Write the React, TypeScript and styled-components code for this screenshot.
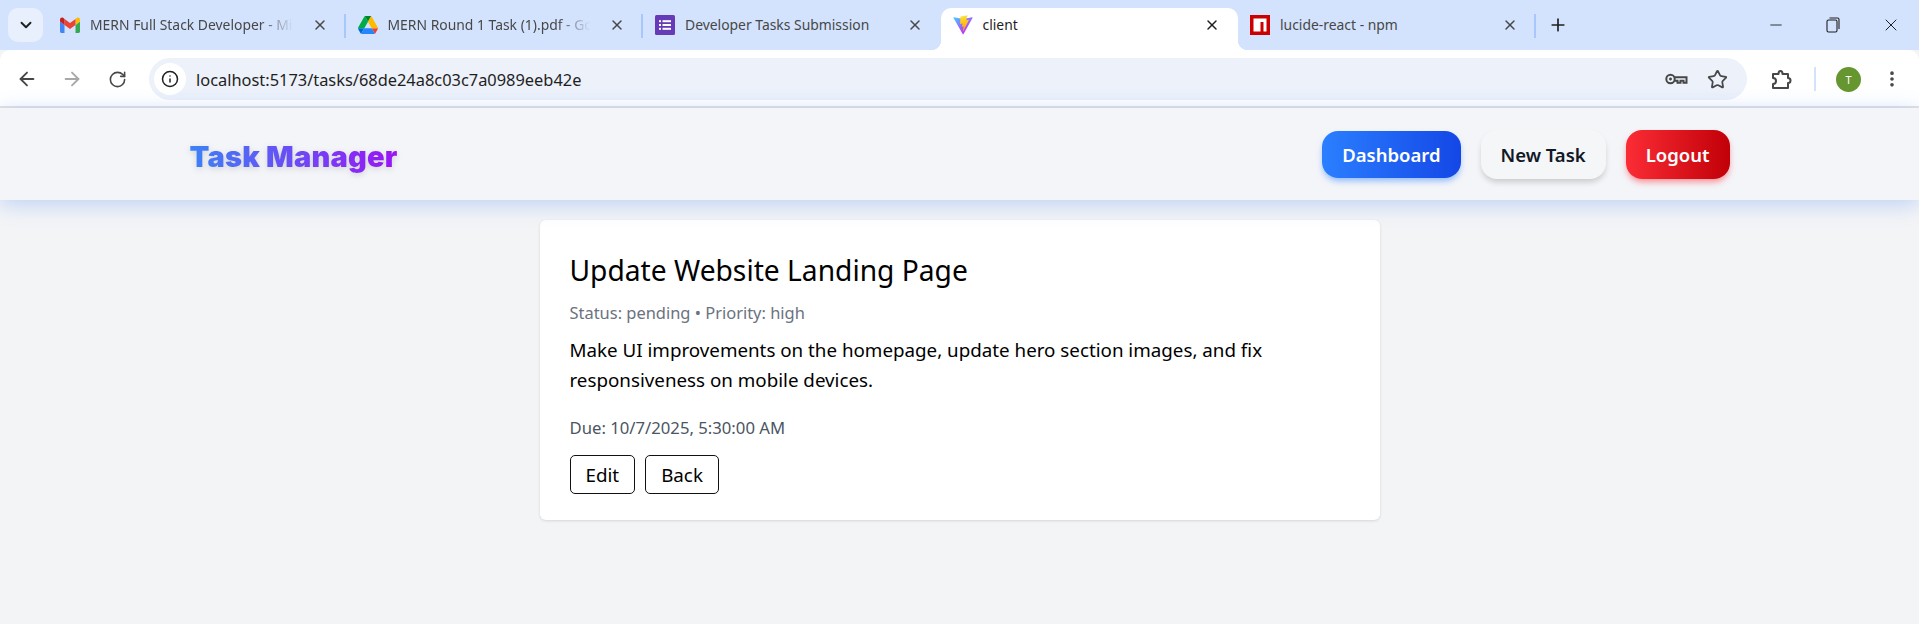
import React from 'react'
import styled, { createGlobalStyle } from 'styled-components'
import { ArrowLeft, ArrowRight, ChevronDown, EllipsisVertical, Info, Minus, Plus, RotateCw, Star, X } from 'lucide-react'

const GlobalStyle = createGlobalStyle`
  html, body {
    margin: 0;
    padding: 0;
    background: #f3f4f6;
  }
  * {
    box-sizing: border-box;
  }
`

const Page = styled.div`
  width: 1919px;
  height: 624px;
  overflow: hidden;
  display: flex;
  flex-direction: column;
  background: #f3f4f6;
  font-family: 'Noto Sans', 'Open Sans', sans-serif;
`

const TabStrip = styled.div`
  height: 50px;
  flex: none;
  display: flex;
  align-items: flex-end;
  background: #d3e3fd;
  position: relative;
`

const TabMenu = styled.button`
  width: 35px;
  height: 34px;
  margin: 0 5px 8px 8px;
  flex: none;
  border: 0;
  padding: 0;
  border-radius: 10px;
  background: #e9f0fd;
  color: #1f1f1f;
  display: flex;
  align-items: center;
  justify-content: center;
`

const Tab = styled.div<{ $active?: boolean; $sep?: boolean }>`
  position: relative;
  width: 297.5px;
  height: 42px;
  flex: none;
  display: flex;
  align-items: center;
  padding: 0 18px 8px 12px;
  gap: 10px;
  border-radius: 10px 10px 0 0;
  background: ${({ $active }) => ($active ? '#ffffff' : 'transparent')};
  color: ${({ $active }) => ($active ? '#1f1f1f' : '#474747')};

  ${({ $active }) =>
    $active &&
    `
    &::before, &::after {
      content: '';
      position: absolute;
      bottom: 0;
      width: 10px;
      height: 10px;
    }
    &::before {
      left: -10px;
      background: radial-gradient(circle at 0 0, transparent 10px, #fff 10.5px);
    }
    &::after {
      right: -10px;
      background: radial-gradient(circle at 100% 0, transparent 10px, #fff 10.5px);
    }
  `}

  ${({ $sep }) =>
    $sep &&
    `
    &::after {
      content: '';
      position: absolute;
      right: 0;
      top: 6px;
      width: 2px;
      height: 24px;
      background: #a8c7fa;
    }
  `}
`

const Favicon = styled.span`
  width: 20px;
  height: 20px;
  flex: none;
  display: flex;
  align-items: center;
  justify-content: center;
`

const TabTitle = styled.span<{ $fade?: boolean }>`
  flex: 1;
  min-width: 0;
  font-size: 13.9px;
  line-height: 18px;
  white-space: nowrap;
  overflow: hidden;
  ${({ $fade }) =>
    $fade &&
    `
    -webkit-mask-image: linear-gradient(to right, #000 80%, transparent 96%);
    mask-image: linear-gradient(to right, #000 80%, transparent 96%);
  `}
`

const NewTab = styled.span`
  margin: 0 0 8px 12px;
  height: 34px;
  display: flex;
  align-items: center;
  color: #1f1f1f;
`

const WindowControls = styled.div`
  margin-left: auto;
  height: 50px;
  display: flex;
  align-items: center;
  padding: 0 18px 0 0;
  gap: 41px;
  color: #1f1f1f;
`

const Toolbar = styled.div`
  height: 58px;
  flex: none;
  display: flex;
  align-items: flex-start;
  background: #ffffff;
  border-radius: 10px 10px 0 0;
  border-bottom: 2px solid #e3e3e3;
  padding: 8px 0 0 15px;
  color: #474747;
`

const NavIcon = styled.span<{ $muted?: boolean }>`
  width: 24px;
  height: 42px;
  margin-right: 21px;
  flex: none;
  display: flex;
  align-items: center;
  justify-content: center;
  color: ${({ $muted }) => ($muted ? '#a8a8a8' : '#474747')};
`

const Omnibox = styled.div`
  width: 1598px;
  height: 42px;
  margin-left: -1px;
  flex: none;
  display: flex;
  align-items: center;
  background: #ecf1fa;
  border-radius: 21px;
  padding: 0 19px 0 5px;
  color: #1f1f1f;
`

const InfoBadge = styled.span`
  width: 32px;
  height: 32px;
  flex: none;
  border-radius: 50%;
  background: #ffffff;
  display: flex;
  align-items: center;
  justify-content: center;
  margin-right: 10px;
`

const Url = styled.span`
  flex: 1;
  font-size: 16.4px;
  color: #1f1f1f;
`

const OmniIcons = styled.div`
  display: flex;
  align-items: center;
  gap: 19px;
  color: #474747;
`

const ToolbarEnd = styled.div`
  flex: 1;
  height: 42px;
  display: flex;
  align-items: center;
  padding-left: 22px;
  color: #474747;
`

const ToolbarRule = styled.span`
  width: 2px;
  height: 24px;
  background: #d3e3fd;
  margin: 0 20px 0 21px;
`

const Avatar = styled.span`
  width: 25px;
  height: 25px;
  border-radius: 50%;
  background: #66962f;
  color: #ffffff;
  font-size: 11px;
  display: flex;
  align-items: center;
  justify-content: center;
  margin-right: 21px;
`

const NavBar = styled.nav`
  height: 92px;
  flex: none;
  background: #f4f5f8;
  box-shadow: 0 4px 20px rgba(59, 130, 246, 0.3);
  position: relative;
`

const NavInner = styled.div`
  width: 1540px;
  height: 100%;
  margin: 0 auto;
  display: flex;
  align-items: center;
  justify-content: space-between;
`

const Logo = styled.span`
  font-family: 'Inter', 'Noto Sans', sans-serif;
  font-size: 29px;
  font-weight: 900;
  letter-spacing: 0.2px;
  position: relative;
  top: 2px;
  background: linear-gradient(to right, #3b82f6, #9b14f5);
  -webkit-background-clip: text;
  background-clip: text;
  color: transparent;
  filter: drop-shadow(0 2px 3px rgba(0, 0, 0, 0.14));
`

const NavLinks = styled.div`
  display: flex;
  align-items: center;
  gap: 20px;
`

const NavButton = styled.a<{ $variant: 'primary' | 'plain' | 'danger' }>`
  height: ${({ $variant }) => ($variant === 'primary' ? '47px' : '49px')};
  padding: 0 20px;
  display: flex;
  align-items: center;
  border-radius: 16px;
  font-size: 18.5px;
  font-weight: 600;
  color: ${({ $variant }) => ($variant === 'plain' ? '#111827' : '#ffffff')};
  background: ${({ $variant }) =>
    $variant === 'primary'
      ? 'linear-gradient(to right, #2b7fff, #1447e6)'
      : $variant === 'danger'
        ? 'linear-gradient(to right, #fb2c36, #c10007)'
        : '#f5f6f8'};
  box-shadow: ${({ $variant }) =>
    $variant === 'primary'
      ? '0 4px 6px -1px rgba(43, 127, 255, 0.5)'
      : $variant === 'danger'
        ? '0 4px 6px -1px rgba(251, 44, 54, 0.5)'
        : '0 4px 6px -1px rgba(0, 0, 0, 0.18)'};
`

const Content = styled.main`
  flex: 1;
  display: flex;
  justify-content: center;
  padding-top: 20px;
`

const Card = styled.article`
  width: 840px;
  height: 300px;
  padding: 32px 30px 0;
  background: #ffffff;
  border-radius: 6px;
  box-shadow: 0 1px 3px rgba(0, 0, 0, 0.12);
`

const Title = styled.h1`
  margin: 0;
  font-size: 28.2px;
  line-height: 36px;
  font-weight: 400;
  color: #000000;
`

const Meta = styled.p`
  margin: 12px 0 0;
  font-size: 16.45px;
  line-height: 26px;
  color: #6b7280;
`

const Body = styled.p`
  margin: 9px 0 0;
  font-size: 18.77px;
  line-height: 30px;
  color: #000000;
`

const Due = styled.p`
  margin: 21px 0 0;
  font-size: 16.7px;
  line-height: 24px;
  color: #4b5563;
`

const Actions = styled.div`
  display: flex;
  gap: 10px;
  margin-top: 15px;
`

const OutlineButton = styled.button`
  height: 39px;
  padding: 0 15px;
  border: 1px solid #111111;
  border-radius: 5px;
  background: #ffffff;
  color: #000000;
  font-family: inherit;
  font-size: 18.8px;
`

const GmailIcon = () => (
  <svg width="20" height="16" viewBox="0 0 20 16">
    <path d="M1.4 16H4.5V8L0 4.6V14.6C0 15.4.6 16 1.4 16Z" fill="#4285f4" />
    <path d="M15.5 16h3.1c.8 0 1.4-.6 1.4-1.4V4.6L15.5 8Z" fill="#34a853" />
    <path d="M15.5 2V8L20 4.6V2.6C20 .8 18 -.2 16.6 .9Z" fill="#fbbc04" />
    <path d="M4.5 8V2L10 6.1 15.5 2V8L10 12.1Z" fill="#ea4335" />
    <path d="M0 2.6V4.6L4.5 8V2L3.4 .9C2 -.2 0 .8 0 2.6Z" fill="#c5221f" />
  </svg>
)

const DriveIcon = () => (
  <svg width="20" height="18" viewBox="0 0 87.3 78">
    <path d="M6.6 66.85l3.85 6.65c.8 1.4 1.95 2.5 3.3 3.3L27.5 53H0c0 1.55.4 3.1 1.2 4.5z" fill="#0066da" />
    <path d="M43.65 25L29.9 1.2c-1.35.8-2.5 1.9-3.3 3.3L1.2 48.5C.4 49.9 0 51.45 0 53h27.5z" fill="#00ac47" />
    <path d="M73.55 76.8c1.35-.8 2.5-1.9 3.3-3.3l1.6-2.75L86.1 57.5c.8-1.4 1.2-2.95 1.2-4.5H59.8l5.85 11.5z" fill="#ea4335" />
    <path d="M43.65 25L57.4 1.2C56.05.4 54.5 0 52.9 0H34.4c-1.6 0-3.15.45-4.5 1.2z" fill="#00832d" />
    <path d="M59.8 53H27.5L13.75 76.8c1.35.8 2.9 1.2 4.5 1.2h50.8c1.6 0 3.15-.45 4.5-1.2z" fill="#2684fc" />
    <path d="M73.4 26.5L60.7 4.5c-.8-1.4-1.95-2.5-3.3-3.3L43.65 25 59.8 53h27.45c0-1.55-.4-3.1-1.2-4.5z" fill="#ffba00" />
  </svg>
)

const FormsIcon = () => (
  <svg width="20" height="20" viewBox="0 0 20 20">
    <rect width="20" height="20" rx="1.5" fill="#673ab7" />
    <g fill="#ffffff">
      <rect x="4" y="5.2" width="2" height="2" />
      <rect x="7.5" y="5.2" width="8.5" height="2" />
      <rect x="4" y="9" width="2" height="2" />
      <rect x="7.5" y="9" width="8.5" height="2" />
      <rect x="4" y="12.8" width="2" height="2" />
      <rect x="7.5" y="12.8" width="8.5" height="2" />
    </g>
  </svg>
)

const ViteIcon = () => (
  <svg width="22" height="22" viewBox="0 0 410 404">
    <defs>
      <linearGradient id="viteA" x1="6" y1="33" x2="235" y2="344" gradientUnits="userSpaceOnUse">
        <stop stopColor="#41d1ff" />
        <stop offset="1" stopColor="#bd34fe" />
      </linearGradient>
      <linearGradient id="viteB" x1="194" y1="8" x2="236" y2="293" gradientUnits="userSpaceOnUse">
        <stop stopColor="#ffea83" />
        <stop offset="0.08" stopColor="#ffdd35" />
        <stop offset="1" stopColor="#ffa800" />
      </linearGradient>
    </defs>
    <path
      d="M399.6 59.5 215.9 388.2c-3.8 6.8-13.5 6.8-17.4.1L11.2 59.5c-4.2-7.4 2.1-16.3 10.4-14.8l183.9 32.9c1.2.2 2.4.2 3.6 0l180-32.8c8.3-1.5 14.7 7.3 10.5 14.7Z"
      fill="url(#viteA)"
    />
    <path
      d="M292.9 1.6 156.9 28.2c-2.2.4-3.9 2.3-4 4.6l-8.4 141.4c-.2 3.3 2.9 5.9 6.1 5.2l37.9-8.8c3.5-.8 6.7 2.3 6 5.9l-11.3 55.2c-.8 3.7 2.7 6.9 6.3 5.8l23.4-7.1c3.6-1.1 7.1 2.1 6.3 5.8l-17.9 86.6c-1.1 5.4 6.1 8.4 9.1 3.7l2-3.1 110.9-221.3c1.9-3.7-1.3-7.9-5.4-7.1l-39 7.5c-3.7.7-6.8-2.7-5.8-6.3l25.5-88.2c1-3.6-2.1-7.1-5.9-6.3Z"
      fill="url(#viteB)"
    />
  </svg>
)

const NpmIcon = () => (
  <svg width="20" height="20" viewBox="0 0 20 20">
    <rect width="20" height="20" fill="#cb0000" />
    <path d="M3.5 3.5H16.5V16.5H13.5V7H10.5V16.5H3.5Z" fill="#ffffff" />
  </svg>
)

const KeyIcon = () => (
  <svg width="24" height="24" viewBox="0 0 24 24" fill="none" stroke="currentColor" strokeWidth="2">
    <circle cx="6.5" cy="12" r="4.2" />
    <circle cx="6.5" cy="12" r="1.2" fill="currentColor" strokeWidth="0.6" />
    <path d="M10.7 10.2H22.5V15.8H19.5V13.8H16.5V15.8H13.5V13.8H10.7" />
  </svg>
)

const PuzzleIcon = () => (
  <svg width="24" height="24" viewBox="0 0 24 24" fill="none" stroke="currentColor" strokeWidth="2" strokeLinejoin="round">
    <path d="M4 7H9.5C9.5 5 10 4 11.5 4S13.5 5 13.5 7H19V11C21 11 21.5 12 21.5 13.5S21 16 19 16V21H4V17C6.5 17 7 15.5 7 14S6.5 11 4 11Z" />
  </svg>
)

const RestoreIcon = () => (
  <svg width="14" height="16" viewBox="0 0 14 16" fill="none" stroke="currentColor" strokeWidth="1.1">
    <rect x="1" y="3" width="10" height="12" rx="1.5" />
    <path d="M3.5 1H11.5C12.4 1 13 1.6 13 2.5V12" />
  </svg>
)

const tabs = [
  { title: 'MERN Full Stack Developer - Mi', icon: <GmailIcon />, fade: true, sep: true },
  { title: 'MERN Round 1 Task (1).pdf - Go', icon: <DriveIcon />, fade: true, sep: true },
  { title: 'Developer Tasks Submission', icon: <FormsIcon /> },
  { title: 'client', icon: <ViteIcon />, active: true },
  { title: 'lucide-react - npm', icon: <NpmIcon />, sep: true },
]

const App: React.FC = () => {
  return (
    <Page>
      <GlobalStyle />
      <TabStrip>
        <TabMenu>
          <ChevronDown size={18} strokeWidth={2.5} />
        </TabMenu>
        {tabs.map((tab) => (
          <Tab key={tab.title} $active={tab.active} $sep={tab.sep}>
            <Favicon>{tab.icon}</Favicon>
            <TabTitle $fade={tab.fade}>{tab.title}</TabTitle>
            <X size={16} strokeWidth={2.2} />
          </Tab>
        ))}
        <NewTab>
          <Plus size={20} strokeWidth={2} />
        </NewTab>
        <WindowControls>
          <Minus size={18} strokeWidth={1.2} />
          <RestoreIcon />
          <X size={20} strokeWidth={1.2} />
        </WindowControls>
      </TabStrip>
      <Toolbar>
        <NavIcon>
          <ArrowLeft size={22} strokeWidth={2} />
        </NavIcon>
        <NavIcon $muted>
          <ArrowRight size={22} strokeWidth={2} />
        </NavIcon>
        <NavIcon>
          <RotateCw size={19} strokeWidth={2} />
        </NavIcon>
        <Omnibox>
          <InfoBadge>
            <Info size={18} strokeWidth={2} />
          </InfoBadge>
          <Url>localhost:5173/tasks/68de24a8c03c7a0989eeb42e</Url>
          <OmniIcons>
            <KeyIcon />
            <Star size={21} strokeWidth={2} />
          </OmniIcons>
        </Omnibox>
        <ToolbarEnd>
          <PuzzleIcon />
          <ToolbarRule />
          <Avatar>T</Avatar>
          <EllipsisVertical size={20} strokeWidth={2.4} />
        </ToolbarEnd>
      </Toolbar>
      <NavBar>
        <NavInner>
          <Logo>Task Manager</Logo>
          <NavLinks>
            <NavButton $variant="primary">Dashboard</NavButton>
            <NavButton $variant="plain">New Task</NavButton>
            <NavButton $variant="danger">Logout</NavButton>
          </NavLinks>
        </NavInner>
      </NavBar>
      <Content>
        <Card>
          <Title>Update Website Landing Page</Title>
          <Meta>Status: pending • Priority: high</Meta>
          <Body>
            Make UI improvements on the homepage, update hero section images, and fix
            responsiveness on mobile devices.
          </Body>
          <Due>Due: 10/7/2025, 5:30:00 AM</Due>
          <Actions>
            <OutlineButton>Edit</OutlineButton>
            <OutlineButton>Back</OutlineButton>
          </Actions>
        </Card>
      </Content>
    </Page>
  )
}

export default App
